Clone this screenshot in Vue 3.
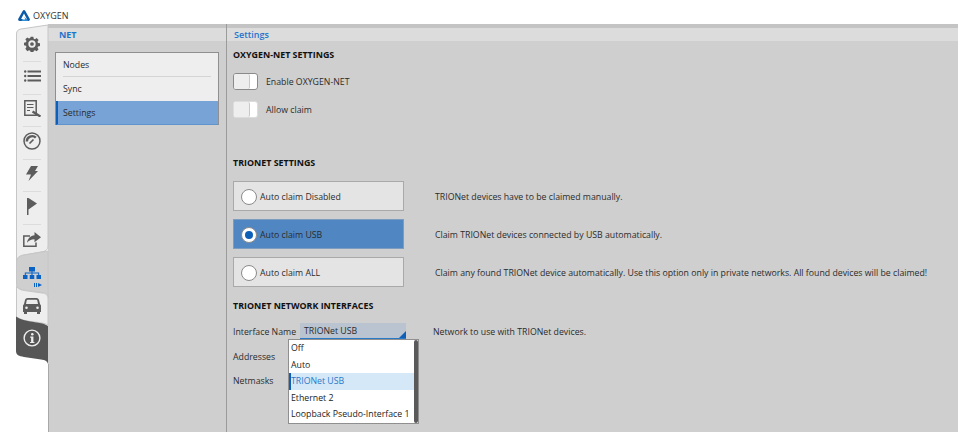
<script setup>
const navItems = [
  { label: 'Nodes', active: false },
  { label: 'Sync', active: false },
  { label: 'Settings', active: true }
]
const toggles = ['Enable OXYGEN-NET', 'Allow claim']
const claims = [
  { label: 'Auto claim Disabled', note: 'TRIONet devices have to be claimed manually.', on: false },
  { label: 'Auto claim USB', note: 'Claim TRIONet devices connected by USB automatically.', on: true },
  { label: 'Auto claim ALL', note: 'Claim any found TRIONet device automatically. Use this option only in private networks. All found devices will be claimed!', on: false }
]
const options = ['Off', 'Auto', 'TRIONet USB', 'Ethernet 2', 'Loopback Pseudo-Interface 1']
</script>

<template>
  <div class="page">
    <header class="brand">
      <svg class="logo" viewBox="0 0 12 11" width="12" height="11">
        <path d="M6 0 C6.500 0 6.900 .3 7.200 .8 L11.700 8.800 C12.200 9.800 11.600 11 10.400 11 H8.200 L6 7 L3.800 11 H1.600 C.4 11 -.2 9.800 .3 8.800 L4.800 .8 C5.100 .3 5.500 0 6 0Z" fill="#0b5aa8" />
        <path d="M6 3.600 L8.900 8.900 H3.100 Z" fill="#fff" />
        <path d="M6 7 L8.900 8.900 L10.200 11 H3.600 L4.400 9.600 H7.600 Z" fill="#2f8fd6" />
      </svg>
      <span>OXYGEN</span>
    </header>
    <div class="shell">
      <aside class="rail">
        <svg class="rail-bg" viewBox="0 0 32 408" width="32" height="408">
          <path fill="#eeeeee" stroke="#c6c6c6" stroke-width="1" d="M.5 10 C.5 7 2 5.500 5 5 L32 1 V222 C32 225.500 30 227 27 227.700 L8 231 C3 232 .5 234 .5 238 Z" />
          <path fill="#cfcfcf" stroke="#c6c6c6" d="M.5 238 C.5 234 3 232 8 231 L32 227 V274 C32 270 30 269 26 268.500 L8 266 C3 265.500 .5 264 .5 260 Z" />
          <path fill="#eeeeee" stroke="#c6c6c6" d="M.5 262 C2 265 5 266 8 266.500 L26 269 C30 269.500 32 271 32 275 V301 C26 297 8 299 .5 293 Z" />
          <path fill="#565656" d="M0 292.500 C8 299 26 297 32 302 V340 C31 336.500 29 336 25 335.500 L8 333 C3 332 0 331 0 327 Z" />
          <rect x="32" y="340" width="1" height="68" fill="#a8a8a8" />
        </svg>
        <div class="tab"><svg viewBox="0 0 24 24" width="16" height="16"><path fill="#5c5c5c" fill-rule="evenodd" d="M10 1h4l.6 3 1.900.8 2.500-1.700 2.900 2.900-1.700 2.500.8 1.900 3 .6v4l-3 .6-.8 1.900 1.700 2.500-2.900 2.900-2.500-1.700-1.900.8-.6 3h-4l-.6-3-1.900-.8-2.500 1.700L2 19l1.700-2.500-.8-1.900-3-.6v-4l3-.6.8-1.900L2 5l2.900-2.900 2.500 1.700 1.900-.8zM12 6.500a5.500 5.500 0 1 0 0 11 5.500 5.500 0 0 0 0-11zm0 2.700a2.800 2.800 0 1 1 0 5.600 2.800 2.800 0 0 1 0-5.600z"/></svg></div>
        <div class="tab"><svg viewBox="0 0 17 12" width="17" height="12"><g fill="#5c5c5c"><circle cx="1.200" cy="1.500" r="1.200"/><circle cx="1.200" cy="6" r="1.200"/><circle cx="1.200" cy="10.500" r="1.200"/><rect x="3.500" y=".5" width="13.500" height="2"/><rect x="3.500" y="5" width="13.500" height="2"/><rect x="3.500" y="9.500" width="13.500" height="2"/></g></svg></div>
        <div class="tab"><svg viewBox="0 0 17 17" width="17" height="17"><g fill="none" stroke="#5c5c5c"><path stroke-width="1.500" d="M.8.8h11.400v14.400H.8z"/><path stroke-width="1.200" d="M3 4.500h6.500M3 7.500h6.500M3 10.500h3"/><path stroke-width="2.400" d="M8.500 11.500l8 5"/></g></svg></div>
        <div class="tab"><svg viewBox="0 0 18 18" width="18" height="18"><g fill="none" stroke="#5c5c5c"><circle cx="9" cy="9" r="8" stroke-width="1.500"/><path stroke-width="2.400" d="M3.800 9.500a5.300 5.300 0 0 1 9-3.800"/><path stroke-width="1.700" d="M6.500 11.500l4-4"/></g></svg></div>
        <div class="tab"><svg viewBox="0 0 12 15" width="12" height="15"><path fill="#5c5c5c" d="M5 0h7L9 5h3L2.500 15 5 8.500H0z"/></svg></div>
        <div class="tab"><svg viewBox="0 0 10 17" width="10" height="17"><path fill="#5c5c5c" d="M0 0h1.500v17H0zM1.500 0L10 5.500 1.500 11.500z"/></svg></div>
        <div class="tab last"><svg viewBox="0 0 18 15" width="18" height="15"><path fill="none" stroke="#5c5c5c" stroke-width="1.500" d="M7 4H.8v10.200H13V10.500"/><path fill="#5c5c5c" d="M11.500 0L18 5.200l-6.500 5V7.200C8 7.200 5.800 8.500 4 10.800 4.500 6.500 7.500 3.500 11.500 3.200z"/></svg></div>
        <div class="tab last net">
          <svg viewBox="0 0 18 12" width="18" height="12"><g fill="#0a62c4"><rect x="6" y="0" width="6" height="4.500"/><rect x="0" y="8" width="4.500" height="4"/><rect x="6.750" y="8" width="4.500" height="4"/><rect x="13.500" y="8" width="4.500" height="4"/><path d="M8.500 4h1v1.500h6.700v3h-1V6.500H9.500v2h-1v-2H2.800v2h-1v-3h6.700z"/></g></svg>
          <svg class="mini" viewBox="0 0 8 4" width="8" height="4"><path fill="#0a62c4" d="M0 0h1v4H0zM2 0h1v4H2zM4 0l4 2-4 2z"/></svg>
        </div>
        <div class="tab last"><svg viewBox="0 0 18 16" width="18" height="16"><path fill="#5c5c5c" fill-rule="evenodd" d="M4.500 0h9C15 0 15.700 1 16 2l1 4 1 1.500V14h-1v2h-3v-2H4v2H1v-2H0V7.500L1 6l1-4c.3-1 1-2 2.500-2zM4.700 1.700c-.6 0-.9.400-1 .9L3 6h12l-.7-3.400c-.1-.5-.4-.9-1-.9zM3.500 8.500a1.300 1.300 0 1 0 0 2.600 1.300 1.300 0 0 0 0-2.600zm11 0a1.300 1.300 0 1 0 0 2.600 1.300 1.300 0 0 0 0-2.600z"/></svg></div>
        <div class="tab last"><svg viewBox="0 0 18 18" width="18" height="18"><circle cx="9" cy="9" r="7.900" fill="none" stroke="#eeeeee" stroke-width="1.400"/><circle cx="9.300" cy="5.200" r="1.300" fill="#eeeeee"/><path fill="#eeeeee" d="M7.200 7.600h3.200v5.300h1v1.200H7.100v-1.200h1V8.800h-.9z"/></svg></div>
      </aside>

      <section class="list-panel">
        <h2 class="panel-title">NET</h2>
        <nav class="nav">
          <a v-for="item in navItems" :key="item.label" class="nav-item" :class="{ selected: item.active }">{{ item.label }}</a>
        </nav>
      </section>

      <main class="content">
        <h2 class="panel-title settings-title">Settings</h2>
        <div class="body">
          <h3 class="heading">OXYGEN-NET SETTINGS</h3>
          <div class="toggles">
            <div v-for="(t, i) in toggles" :key="t" class="toggle-row">
              <span class="switch" :class="{ dark: i === 0 }"><span class="knob"></span></span>
              <span>{{ t }}</span>
            </div>
          </div>

          <h3 class="heading trionet">TRIONET SETTINGS</h3>
          <div class="claims">
            <div v-for="c in claims" :key="c.label" class="claim-row">
              <div class="claim" :class="{ on: c.on }">
                <span class="radio"><span v-if="c.on" class="dot"></span></span>
                <span>{{ c.label }}</span>
              </div>
              <span class="note">{{ c.note }}</span>
            </div>
          </div>

          <h3 class="heading network">TRIONET NETWORK INTERFACES</h3>
          <div class="iface">
            <span class="field-label">Interface Name</span>
            <div class="select">
              <span>TRIONet USB</span>
              <span class="corner"></span>
              <ul class="menu">
                <li v-for="o in options" :key="o" :class="{ chosen: o === 'TRIONet USB' }">{{ o }}</li>
              </ul>
            </div>
            <span class="note iface-note">Network to use with TRIONet devices.</span>
          </div>
          <div class="field-label addresses">Addresses</div>
          <div class="field-label netmasks">Netmasks</div>
        </div>
      </main>
    </div>
  </div>
</template>

<style>
html, body { margin: 0; background: #fff; overflow: hidden; }
</style>

<style scoped>
.page {
  width: 966px;
  height: 446px;
  background: #fff;
  font-family: "Open Sans", "Noto Sans", sans-serif;
  font-size: 8.750px;
  color: #2b2b2b;
  overflow: hidden;
}
.brand {
  height: 24px;
  display: flex;
  align-items: center;
  gap: 3px;
  padding: 7px 0 0 18px;
  box-sizing: border-box;
  font-size: 9px;
  color: #333;
}
.logo { display: block; }
.shell {
  display: flex;
  width: 942px;
  height: 408px;
  margin-left: 16px;
}
.rail {
  position: relative;
  z-index: 1;
  width: 32px;
  flex: none;
  padding-top: 5.500px;
  box-sizing: border-box;
}
.rail-bg {
  position: absolute;
  top: 0;
  left: 0;
  overflow: visible;
}
.tab {
  position: relative;
  height: 32.500px;
  padding-bottom: 3px;
  margin: 0 7px;
  display: flex;
  align-items: center;
  justify-content: center;
  box-sizing: border-box;
  border-bottom: 1px solid #dcdcdc;
}
.tab svg { flex: none; }
.tab.last { border-bottom: 0; }
.tab.net { margin-top: 1.500px; }
.mini { position: absolute; left: 11px; top: 24px; }
.list-panel {
  width: 178px;
  flex: none;
  background: #cfcfcf;
}
.content {
  flex: 1;
  background: #cfcfcf;
  border-left: 1px solid #9b9b9b;
  min-width: 0;
}
.panel-title {
  margin: 0;
  height: 13px;
  border-top: 4px solid #c4c4c4;
  background: #dcdcdc;
  color: #1f74cc;
  font-size: 9px;
  font-weight: 700;
  line-height: 13px;
  padding-left: 11px;
  box-sizing: content-box;
}
.settings-title { padding-left: 7px; font-weight: 600; }
.nav {
  margin: 11px 7px 0;
  display: flex;
  flex-direction: column;
  border: 1px solid #8f8f8f;
  border-bottom: 0;
  background: #eeeeee;
}
.nav-item {
  height: 24px;
  display: flex;
  align-items: center;
  padding-left: 7px;
  box-sizing: border-box;
  position: relative;
}
.nav-item:first-child::after {
  content: "";
  position: absolute;
  left: 7px;
  right: 7px;
  bottom: 0;
  height: 1px;
  background: #d4d4d4;
}
.nav-item.selected {
  background: #77a3d6;
  border-left: 2px solid #0d5fb8;
  border-bottom: 1px solid #5f93cc;
  padding-left: 5px;
}
.body { padding: 8px 6px 0; }
.heading {
  margin: 0;
  font-size: 8.900px;
  font-weight: 700;
  color: #111;
  line-height: 12px;
}
.toggles {
  margin-top: 12px;
  display: flex;
  flex-direction: column;
  gap: 11px;
}
.toggle-row {
  height: 17px;
  display: flex;
  align-items: center;
  gap: 8px;
}
.switch {
  width: 25px;
  height: 17px;
  box-sizing: border-box;
  background: #fff;
  border: 1px solid #dcdcdc;
  border-radius: 3px;
  position: relative;
  display: block;
  flex: none;
}
.switch.dark { border-color: #8a8a8a; }
.knob {
  position: absolute;
  left: 0;
  top: 0;
  bottom: 0;
  width: 15px;
  background: #eeeeee;
  border-right: 1px solid #c8c8c8;
  border-radius: 2px;
}
.trionet { margin-top: 39px; }
.claims {
  margin-top: 12px;
  display: flex;
  flex-direction: column;
  gap: 8px;
}
.claim-row {
  display: flex;
  align-items: center;
  gap: 31px;
}
.claim {
  width: 171px;
  height: 30px;
  box-sizing: border-box;
  background: #e4e4e4;
  border: 1px solid #a9a9a9;
  display: flex;
  align-items: center;
  gap: 3px;
  padding: 2px 0 0 7px;
  flex: none;
}
.claim.on { background: #5087c3; border-color: #7d9dc0; }
.radio {
  width: 16px;
  height: 16px;
  border-radius: 50%;
  background: #fff;
  border: 1px solid #8a8a8a;
  box-sizing: border-box;
  display: flex;
  align-items: center;
  justify-content: center;
  flex: none;
}
.dot { width: 8px; height: 8px; border-radius: 50%; background: #0d5fb8; }
.note { white-space: nowrap; padding-top: 2px; }
.network { margin-top: 13px; }
.iface {
  margin-top: 11px;
  height: 16px;
  display: flex;
  align-items: center;
}
.field-label { width: 67px; flex: none; line-height: 16px; }
.iface .field-label { padding-top: 2px; }
.addresses { margin-top: 10px; }
.netmasks { margin-top: 8px; }
.select {
  position: relative;
  width: 106px;
  height: 16px;
  padding-left: 4px;
  box-sizing: border-box;
  background: #b9c4d0;
  border-bottom: 1px solid #2a78c8;
  flex: none;
  line-height: 16px;
}
.corner {
  position: absolute;
  right: 0;
  bottom: 0;
  width: 0;
  height: 0;
  border-left: 7px solid transparent;
  border-bottom: 7px solid #0d5fb8;
}
.menu {
  position: absolute;
  top: 16px;
  left: -12px;
  z-index: 2;
  width: 131px;
  margin: 0;
  padding: 0;
  list-style: none;
  background: #fff;
  border: 1px solid #8f8f8f;
  box-sizing: border-box;
  color: #222;
}
.menu li {
  height: 16.600px;
  line-height: 16px;
  padding-left: 2px;
  white-space: nowrap;
}
.menu::after {
  content: "";
  position: absolute;
  top: 0;
  right: 0;
  bottom: 0;
  width: 4px;
  border-radius: 2px;
  background: #5a5a5a;
}
.menu li.chosen {
  background: #d5e8f8;
  color: #2a78c8;
  border-left: 2px solid #0d5fb8;
  padding-left: 0;
}
.iface-note { margin-left: 27px; }
</style>
